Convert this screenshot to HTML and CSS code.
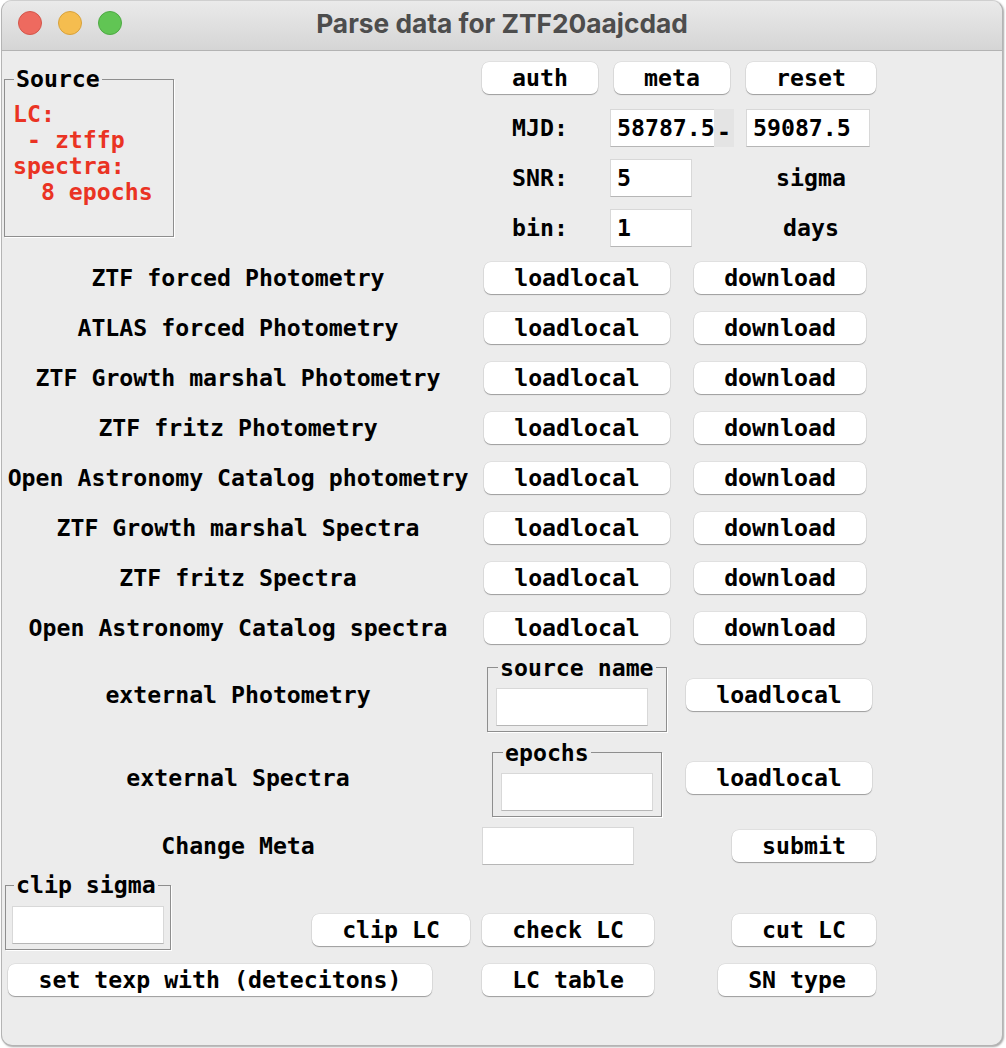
FILE: index.html
```html
<!DOCTYPE html>
<html lang="en">
<head>
<meta charset="utf-8">
<title>Parse data for ZTF20aajcdad</title>
<link rel="stylesheet" href="styles.css">
</head>
<body>
<div class="window">
  <header class="titlebar">
    <div class="lights">
      <span class="light close"></span>
      <span class="light min"></span>
      <span class="light max"></span>
    </div>
    <h1 class="title">Parse data for ZTF20aajcdad</h1>
    <div></div>
  </header>
  <main class="content">
    <section class="top">
      <fieldset class="group source-group">
        <legend>Source</legend>
        <div class="source-text">LC:
 - ztffp
spectra:
  8 epochs</div>
      </fieldset>
      <button class="btn b-auth">auth</button>
      <button class="btn b-meta">meta</button>
      <button class="btn b-reset">reset</button>

      <span class="lbl c1">MJD:</span>
      <div class="mjd-range">
        <input class="entry e-mjd1" value="58787.5">
        <span class="dash">-</span>
      </div>
      <input class="entry e-mjd2" value="59087.5">

      <span class="lbl c1">SNR:</span>
      <input class="entry e-small" value="5">
      <span class="lbl c3">sigma</span>

      <span class="lbl c1">bin:</span>
      <input class="entry e-small" value="1">
      <span class="lbl c3">days</span>
    </section>

    <section class="rows">
      <span class="lbl">ZTF forced Photometry</span>
      <button class="btn b-load">loadlocal</button>
      <button class="btn b-down">download</button>

      <span class="lbl">ATLAS forced Photometry</span>
      <button class="btn b-load">loadlocal</button>
      <button class="btn b-down">download</button>

      <span class="lbl">ZTF Growth marshal Photometry</span>
      <button class="btn b-load">loadlocal</button>
      <button class="btn b-down">download</button>

      <span class="lbl">ZTF fritz Photometry</span>
      <button class="btn b-load">loadlocal</button>
      <button class="btn b-down">download</button>

      <span class="lbl">Open Astronomy Catalog photometry</span>
      <button class="btn b-load">loadlocal</button>
      <button class="btn b-down">download</button>

      <span class="lbl">ZTF Growth marshal Spectra</span>
      <button class="btn b-load">loadlocal</button>
      <button class="btn b-down">download</button>

      <span class="lbl">ZTF fritz Spectra</span>
      <button class="btn b-load">loadlocal</button>
      <button class="btn b-down">download</button>

      <span class="lbl">Open Astronomy Catalog spectra</span>
      <button class="btn b-load">loadlocal</button>
      <button class="btn b-down">download</button>

      <span class="lbl">external Photometry</span>
      <fieldset class="group name-group">
        <legend>source name</legend>
        <input class="entry e-group">
      </fieldset>
      <button class="btn b-load2">loadlocal</button>

      <span class="lbl">external Spectra</span>
      <fieldset class="group epochs-group">
        <legend>epochs</legend>
        <input class="entry e-group">
      </fieldset>
      <button class="btn b-load2">loadlocal</button>

      <span class="lbl">Change Meta</span>
      <input class="entry e-meta">
      <button class="btn b-submit">submit</button>
    </section>

    <section class="bottom">
      <fieldset class="group clip-group">
        <legend>clip sigma</legend>
        <input class="entry e-group">
      </fieldset>
      <button class="btn b-clip">clip LC</button>
      <button class="btn b-check">check LC</button>
      <button class="btn b-cut">cut LC</button>

      <button class="btn b-texp">set texp with (detecitons)</button>
      <button class="btn b-table">LC table</button>
      <button class="btn b-type">SN type</button>
    </section>
  </main>
</div>
</body>
</html>
```

FILE: styles.css
```css
* {
  box-sizing: border-box;
}

html,
body {
  margin: 0;
  padding: 0;
  background: #ffffff;
}

body {
  width: 1006px;
  height: 1048px;
  overflow: hidden;
  font-family: "DejaVu Sans Mono", "Liberation Mono", monospace;
  font-weight: bold;
  font-size: 23.2px;
  color: #000;
}

.window {
  margin-left: 1px;
  width: 1002px;
  height: 1046px;
  border: 1px solid #b4b4b4;
  border-top-color: #cfcfcf;
  border-radius: 11px;
  overflow: hidden;
  background: #ececec;
  box-shadow: 1px 1px 2px rgba(0, 0, 0, 0.35);
  display: flex;
  flex-direction: column;
}

/* ---------- title bar ---------- */
.titlebar {
  height: 50px;
  flex: none;
  border-bottom: 1px solid #b3b3b3;
  background: linear-gradient(#eaeaea, #d5d5d5);
  display: grid;
  grid-template-columns: 1fr auto 1fr;
  align-items: start;
}

.lights {
  display: flex;
  gap: 16px;
  padding: 10px 0 0 16px;
}

.light {
  width: 24px;
  height: 24px;
  border-radius: 50%;
  display: block;
}

.light.close {
  background: #ee6a5f;
  border: 1px solid #d3564b;
}

.light.min {
  background: #f5bd4f;
  border: 1px solid #d7a13c;
}

.light.max {
  background: #61c554;
  border: 1px solid #4ea944;
}

.title {
  margin: 0;
  padding-top: 8px;
  font-family: "Inter", "Liberation Sans", sans-serif;
  font-weight: 700;
  font-size: 26.3px;
  line-height: 30px;
  color: #4d4d4d;
  white-space: nowrap;
}

/* ---------- shared widgets ---------- */
.lbl {
  line-height: 26px;
  text-align: center;
  white-space: pre;
}

.btn {
  height: 32px;
  padding: 0;
  border: none;
  border-radius: 7px;
  background: #ffffff;
  box-shadow: 0 1px 1px rgba(0, 0, 0, 0.3), 0 0 0 0.5px rgba(0, 0, 0, 0.1);
  font: inherit;
  line-height: 32px;
  color: #000;
  text-align: center;
  white-space: pre;
}

.entry {
  height: 38px;
  padding: 0 6px 2px 6px;
  border: 1px solid #d8d8d8;
  border-bottom-color: #b6b6b6;
  background: #ffffff;
  font: inherit;
  color: #000;
  outline: none;
  border-radius: 0;
}

.group {
  margin: 0;
  padding: 0;
  border: 1px solid #8e8e8e;
  box-shadow: 1px 1px 0 #ffffff;
  min-inline-size: 0;
}

.group legend {
  margin-left: 10px;
  padding: 0 2px;
  line-height: 26px;
}

.group .e-group {
  display: block;
  width: 152px;
  margin: 7px 0 5px 8px;
}

/* ---------- top section ---------- */
.top {
  display: grid;
  grid-template-columns: 474px 128px 136px 142px;
  grid-template-rows: repeat(4, 50px);
  align-items: center;
  padding-top: 2px;
}

.source-group {
  grid-column: 1;
  grid-row: 1 / span 4;
  align-self: start;
  width: 170px;
  margin: 13px 0 0 2px;
}

.source-group legend {
  margin-left: 9px;
}

.source-text {
  margin: 9px 0 31px 8px;
  line-height: 26px;
  white-space: pre;
  color: #ea3323;
}

.b-auth {
  grid-column: 2;
  grid-row: 1;
  width: 116px;
  justify-self: center;
}

.b-meta {
  grid-column: 3;
  grid-row: 1;
  width: 116px;
  justify-self: center;
}

.b-reset {
  grid-column: 4;
  grid-row: 1;
  width: 130px;
  justify-self: center;
}

.lbl.c1 {
  grid-column: 2;
}

.lbl.c3 {
  grid-column: 4;
}

.mjd-range {
  grid-column: 3;
  display: flex;
  margin-left: 6px;
}

.e-mjd1 {
  width: 104px;
  padding-right: 0;
  border-right: none;
}

.dash {
  width: 20px;
  height: 38px;
  padding-top: 4px;
  line-height: 38px;
  background: #e4e4e4;
  text-align: center;
  overflow: hidden;
}

.e-mjd2 {
  grid-column: 4;
  width: 124px;
  margin-left: 6px;
}

.e-small {
  grid-column: 3;
  width: 82px;
  margin-left: 6px;
}

/* ---------- load rows ---------- */
.rows {
  display: grid;
  grid-template-columns: 472px 206px 200px;
  grid-template-rows: repeat(8, 50px) 84px 82px 53px;
  align-items: center;
}

.rows .lbl {
  grid-column: 1;
}

.b-load {
  width: 186px;
  justify-self: center;
}

.b-down {
  width: 172px;
  justify-self: center;
}

.name-group {
  width: 180px;
  justify-self: center;
  margin-top: -4px;
}

.epochs-group {
  width: 170px;
  justify-self: center;
}

.b-load2 {
  width: 186px;
  margin-left: 6px;
  justify-self: start;
}

.e-meta {
  width: 152px;
  margin-left: 8px;
  justify-self: start;
}

.b-submit {
  width: 144px;
  margin-left: 52px;
  justify-self: start;
}

/* ---------- bottom ---------- */
.bottom {
  display: grid;
  grid-template-columns: 298px 176px 204px 202px;
  grid-template-rows: 84px 48px;
  align-items: start;
}

.clip-group {
  grid-column: 1;
  grid-row: 1;
  width: 166px;
  margin-left: 3px;
}

.clip-group legend {
  margin-left: 8px;
}

.clip-group .e-group {
  margin: 8px 0 5px 6px;
}

.b-clip,
.b-check,
.b-cut {
  grid-row: 1;
  margin-top: 42px;
}

.b-clip {
  grid-column: 2;
  width: 158px;
  margin-left: 12px;
}

.b-check {
  grid-column: 3;
  width: 172px;
  margin-left: 6px;
}

.b-cut {
  grid-column: 4;
  width: 144px;
  margin-left: 52px;
}

.b-texp,
.b-table,
.b-type {
  grid-row: 2;
  align-self: center;
}

.b-texp {
  grid-column: 1 / span 2;
  width: 424px;
  margin-left: 6px;
}

.b-table {
  grid-column: 3;
  width: 172px;
  margin-left: 6px;
}

.b-type {
  grid-column: 4;
  width: 158px;
  margin-left: 38px;
}
```
